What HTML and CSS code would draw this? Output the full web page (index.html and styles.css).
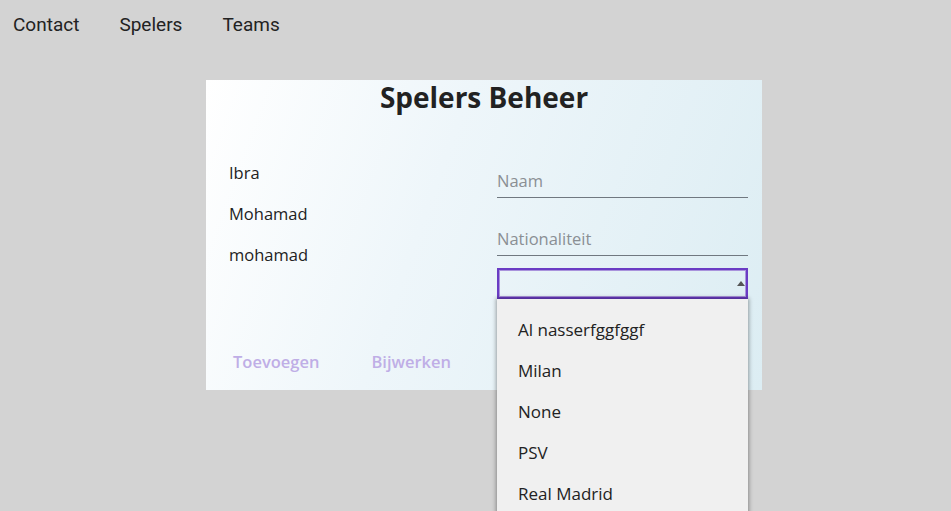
FILE: index.html
```html
<!DOCTYPE html>
<html lang="nl">
<head>
<meta charset="utf-8">
<title>Spelers Beheer</title>
<link rel="stylesheet" href="styles.css">
</head>
<body>
<nav class="nav">
  <a class="nav-link" href="#">Contact</a>
  <a class="nav-link" href="#">Spelers</a>
  <a class="nav-link" href="#">Teams</a>
</nav>
<main class="page">
  <section class="card">
    <h1 class="title">Spelers Beheer</h1>
    <div class="body">
      <ul class="players">
        <li>Ibra</li>
        <li>Mohamad</li>
        <li>mohamad</li>
      </ul>
      <form class="form">
        <div class="field"><span class="placeholder">Naam</span></div>
        <div class="field"><span class="placeholder">Nationaliteit</span></div>
        <div class="select-wrap">
          <div class="select"><span class="arrow"></span></div>
          <ul class="dropdown">
            <li>Al nasserfggfggf</li>
            <li>Milan</li>
            <li>None</li>
            <li>PSV</li>
            <li>Real Madrid</li>
          </ul>
        </div>
      </form>
    </div>
    <div class="actions">
      <button class="btn" type="button">Toevoegen</button>
      <button class="btn" type="button">Bijwerken</button>
    </div>
  </section>
</main>
</body>
</html>
```
FILE: styles.css
```css
html, body {
  margin: 0;
  padding: 0;
  height: 100%;
  overflow: hidden;
}
body {
  background: #d3d3d3;
  font-family: "Open Sans", "Noto Sans", sans-serif;
  color: #222;
}
.nav {
  display: flex;
  gap: 40px;
  padding: 12px 0 0 13px;
  height: 68px;
  box-sizing: border-box;
}
.nav-link {
  font-family: Roboto, sans-serif;
  font-size: 19px;
  color: #222;
  text-decoration: none;
  line-height: 25px;
}
.page {
  padding-left: 206px;
  padding-top: 12px;
}
.card {
  width: 556px;
  height: 310px;
  box-sizing: border-box;
  background: linear-gradient(110deg, #ffffff 0%, #eef6fa 40%, #dcedf3 100%);
  display: flex;
  flex-direction: column;
}
.title {
  margin: 0;
  text-align: center;
  font-size: 28px;
  font-weight: 700;
  line-height: 34px;
  color: #222;
}
.body {
  display: flex;
  padding: 0 14px 0 23px;
}
.players {
  list-style: none;
  margin: 0;
  padding: 38px 0 0 0;
  width: 268px;
  font-size: 16.5px;
}
.players li {
  line-height: 41px;
  height: 41px;
}
.form {
  width: 251px;
  margin: 0;
  padding-top: 50px;
}
.field {
  height: 34px;
  border-bottom: 1px solid #707880;
  margin-bottom: 24px;
  box-sizing: border-box;
  display: flex;
  align-items: center;
}
.placeholder {
  font-size: 16.5px;
  color: #8a8f94;
}
.field + .field {
  margin-bottom: 12px;
}
.select-wrap {
  position: relative;
}
.select {
  height: 31px;
  box-sizing: border-box;
  border: 2px solid #6a3cc4;
  box-shadow: inset 0 0 0 1px #a993dc;
  position: relative;
}
.arrow {
  position: absolute;
  right: 1px;
  top: 11px;
  width: 0;
  height: 0;
  border-left: 4px solid transparent;
  border-right: 4px solid transparent;
  border-bottom: 5px solid #555;
}
.dropdown {
  position: absolute;
  left: 0;
  right: 0;
  top: 31px;
  margin: 0;
  padding: 10px 0 0 21px;
  list-style: none;
  background: #f0f0f0;
  box-shadow: 0 0 4px 1px rgba(0,0,0,0.35);
  height: 230px;
  font-size: 17px;
  color: #222;
}
.dropdown li {
  line-height: 41px;
  height: 41px;
}
.actions {
  display: flex;
  gap: 52px;
  padding: 51px 0 0 27px;
}
.btn {
  background: none;
  border: none;
  font-family: "Open Sans", sans-serif;
  font-size: 16.5px;
  font-weight: 600;
  color: #bfaee6;
  padding: 0;
}
```
